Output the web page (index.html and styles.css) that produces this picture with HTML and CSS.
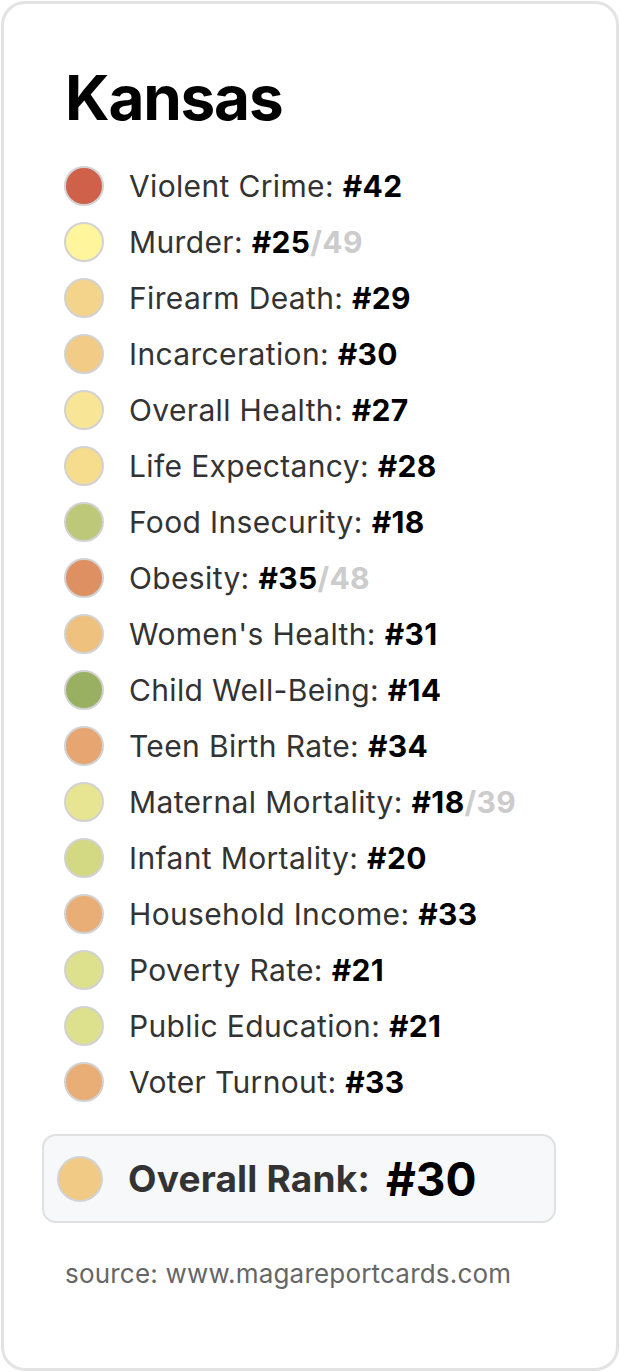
FILE: index.html
```html
<!DOCTYPE html>
<html lang="en">
<head>
<meta charset="utf-8">
<title>Kansas</title>
<link rel="stylesheet" href="styles.css">
</head>
<body>
<div class="card">
  <h1 class="title">Kansas</h1>
  <ul class="list">
    <li class="row"><span class="dot" style="background:#cf604a"></span><span class="label">Violent Crime: <b class="rank">#42</b></span></li>
    <li class="row"><span class="dot" style="background:#fff59d"></span><span class="label">Murder: <b class="rank">#25</b><b class="total">/49</b></span></li>
    <li class="row"><span class="dot" style="background:#f4d48b"></span><span class="label">Firearm Death: <b class="rank">#29</b></span></li>
    <li class="row"><span class="dot" style="background:#f2cb86"></span><span class="label">Incarceration: <b class="rank">#30</b></span></li>
    <li class="row"><span class="dot" style="background:#f9e596"></span><span class="label">Overall Health: <b class="rank">#27</b></span></li>
    <li class="row"><span class="dot" style="background:#f6dc8d"></span><span class="label">Life Expectancy: <b class="rank">#28</b></span></li>
    <li class="row"><span class="dot" style="background:#bdc879"></span><span class="label">Food Insecurity: <b class="rank">#18</b></span></li>
    <li class="row"><span class="dot" style="background:#de9062"></span><span class="label">Obesity: <b class="rank">#35</b><b class="total">/48</b></span></li>
    <li class="row"><span class="dot" style="background:#efc17f"></span><span class="label">Women's Health: <b class="rank">#31</b></span></li>
    <li class="row"><span class="dot" style="background:#99b062"></span><span class="label">Child Well-Being: <b class="rank">#14</b></span></li>
    <li class="row"><span class="dot" style="background:#e7a571"></span><span class="label">Teen Birth Rate: <b class="rank">#34</b></span></li>
    <li class="row"><span class="dot" style="background:#e8e592"></span><span class="label">Maternal Mortality: <b class="rank">#18</b><b class="total">/39</b></span></li>
    <li class="row"><span class="dot" style="background:#d3d982"></span><span class="label">Infant Mortality: <b class="rank">#20</b></span></li>
    <li class="row"><span class="dot" style="background:#e9ae75"></span><span class="label">Household Income: <b class="rank">#33</b></span></li>
    <li class="row"><span class="dot" style="background:#dde08d"></span><span class="label">Poverty Rate: <b class="rank">#21</b></span></li>
    <li class="row"><span class="dot" style="background:#dde08d"></span><span class="label">Public Education: <b class="rank">#21</b></span></li>
    <li class="row"><span class="dot" style="background:#e9ae75"></span><span class="label">Voter Turnout: <b class="rank">#33</b></span></li>
  </ul>
  <div class="overall">
    <span class="dot dot-lg" style="background:#f1ca86"></span>
    <span class="overall-label">Overall Rank:</span>
    <span class="overall-rank">#30</span>
  </div>
  <p class="source">source: www.magareportcards.com</p>
</div>
</body>
</html>
```

FILE: styles.css
```css
* { box-sizing: border-box; }

html, body {
  margin: 0;
  padding: 0;
  background: #ffffff;
}

body {
  font-family: Inter, "Liberation Sans", Arial, sans-serif;
  color: #333333;
}

.card {
  margin: 1px;
  height: 1370px;
  border: 3px solid #e3e3e3;
  border-radius: 24px;
  background: #ffffff;
  padding: 63px 0 0 38px;
}

.title {
  margin: 0 0 29px 23px;
  font-size: 62px;
  line-height: 62px;
  font-weight: 700;
  color: #000000;
  letter-spacing: -1.2px;
}

.list {
  list-style: none;
  margin: 0;
  padding: 0 0 0 22px;
}

.row {
  display: flex;
  align-items: center;
  gap: 25px;
  height: 56px;
}

.dot {
  flex: none;
  width: 40px;
  height: 40px;
  border-radius: 50%;
  border: 2px solid #d2d2d2;
}

.label {
  font-size: 30px;
  line-height: 1;
  color: #333333;
  white-space: nowrap;
  letter-spacing: 0.35px;
}

.rank {
  font-weight: 700;
  color: #000000;
}

.total {
  font-weight: 700;
  color: #cccccc;
}

.overall {
  margin-top: 24px;
  width: 514px;
  height: 89px;
  display: flex;
  align-items: center;
  padding-left: 13px;
  border: 2px solid #e0e0e0;
  border-radius: 14px;
  background: #f7f8fa;
}

.dot-lg {
  width: 46px;
  height: 46px;
  margin-right: 25px;
}

.overall-label {
  font-size: 37px;
  font-weight: 700;
  color: #333333;
  margin-right: 16px;
  letter-spacing: 0.2px;
}

.overall-rank {
  font-size: 46px;
  font-weight: 700;
  color: #000000;
}

.source {
  margin: 35px 0 0 23px;
  font-size: 26px;
  color: #666666;
  letter-spacing: 0.2px;
}
```
